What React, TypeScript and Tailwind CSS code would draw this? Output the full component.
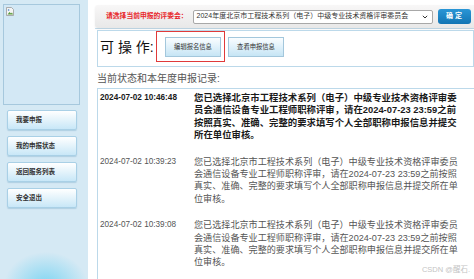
import React from 'react';

const records = [
  {
    time: '2024-07-02 10:46:48',
    bold: true,
    lines: [
      '您已选择北京市工程技术系列（电子）中级专业技术资格评审委',
      '员会通信设备专业工程师职称评审，请在2024-07-23 23:59之前',
      '按照真实、准确、完整的要求填写个人全部职称申报信息并提交',
      '所在单位审核。',
    ],
  },
  {
    time: '2024-07-02 10:39:23',
    bold: false,
    lines: [
      '您已选择北京市工程技术系列（电子）中级专业技术资格评审委员',
      '会通信设备专业工程师职称评审，请在2024-07-23 23:59之前按照',
      '真实、准确、完整的要求填写个人全部职称申报信息并提交所在单',
      '位审核。',
    ],
  },
  {
    time: '2024-07-02 10:39:08',
    bold: false,
    lines: [
      '您已选择北京市工程技术系列（电子）中级专业技术资格评审委员',
      '会通信设备专业工程师职称评审，请在2024-07-23 23:59之前按照',
      '真实、准确、完整的要求填写个人全部职称申报信息并提交所在单',
      '位审核。',
    ],
  },
];

const menu = ['我要申报', '我的申报状态', '返回服务列表', '安全退出'];

function BrokenImage() {
  return (
    <svg width="8" height="9" viewBox="0 0 8 9">
      <path d="M0.5 0.5h5l2 2v6h-7z" fill="#f4f4f4" stroke="#9a9a9a" strokeWidth="0.8" />
      <path d="M1.5 7.5l2-2.5 1.5 1.5 1-1 1 2z" fill="#5a9a3a" />
      <circle cx="2.6" cy="3" r="0.8" fill="#3b7fc4" />
    </svg>
  );
}

export default function App() {
  return (
    <div className="relative flex h-[279px] w-[474px] overflow-hidden bg-white font-['Liberation_Sans','Noto_Sans_CJK_SC',sans-serif]">
      {/* left menu */}
      <div className="flex w-[88px] shrink-0 flex-col bg-[#d5e9f4] bg-[radial-gradient(ellipse_42px_34px_at_46px_286px,#7ed5f2_0%,rgba(213,233,244,0)_100%)]">
        <div className="ml-[3px] mt-[4px] h-[101px] w-[77px] border border-[#a6c8dd] bg-[#d3e8f5] pl-[2px] pt-[2px]">
          <BrokenImage />
        </div>
        <div className="ml-[7px] mt-[5px] flex w-[70px] flex-col gap-[6px]">
          {menu.map(m => (
            <div key={m} className="flex h-[20px] items-center rounded-[2px] border border-[#a9d0e6] bg-[linear-gradient(to_bottom,#ffffff,#c8e7f7)] pl-[8px] text-[6.5px] font-bold text-[#333] shadow-[0_1px_1px_rgba(120,170,200,0.4)]">
              {m}
            </div>
          ))}
        </div>
      </div>

      {/* main */}
      <div className="flex min-w-0 flex-1 flex-col pl-[7px]">
        <div className="h-[36px] border-b border-[#c6dfee]">
          <div className="mt-[5px] flex h-[23px] items-center rounded-l-[3px] bg-[linear-gradient(to_bottom,#f8f7f7,#e8e8e8)] pl-[11px] shadow-[0_1px_2px_rgba(0,0,0,0.08)]">
            <span className="text-[6.8px] font-bold text-[#e8262a]">请选择当前申报的评委会：</span>
            <div className="ml-[5px] flex h-[14px] w-[240px] items-center justify-between rounded-[2px] border border-[#a8a8a8] bg-white pl-[3px] pr-[4px] text-[7px] text-[#333]">
              <span>2024年度北京市工程技术系列（电子）中级专业技术资格评审委员会</span>
              <svg width="6" height="4" viewBox="0 0 6 4">
                <path d="M0.8 0.8L3 3l2.2-2.2" fill="none" stroke="#333" strokeWidth="1" />
              </svg>
            </div>
            <div className="ml-[5px] flex h-[15px] w-[33px] items-center justify-center rounded-[3px] bg-[linear-gradient(to_bottom,#2a96d6,#1275b4)] text-[7px] font-bold text-white">
              确 定
            </div>
          </div>
        </div>

        <div className="ml-[2px] mt-[1px] border border-[#bcd9ea] pb-[4px] pl-[2px]">
          <div className="flex h-[31px] items-center">
            <span className="w-[56px] text-[14px] leading-none text-[#111]">可 操 作:</span>
            <div className="flex h-full items-center border border-[#e03a3a] pl-[8px] pr-[3px]">
              <div className="flex h-[20px] w-[56px] items-center justify-center border border-[#a3c7dc] bg-[linear-gradient(to_bottom,#fafdff,#c6e5f5)] text-[6.3px] text-[#333]">
                编辑报名信息
              </div>
            </div>
            <div className="ml-[3px] flex h-[20px] w-[56px] items-center justify-center border border-[#a3c7dc] bg-[linear-gradient(to_bottom,#fafdff,#c6e5f5)] text-[6.3px] text-[#333]">
              查看申报信息
            </div>
          </div>
        </div>

        <div className="ml-[2px] mt-[5px] text-[10px] leading-[14px] text-[#555]">当前状态和本年度申报记录:</div>

        <div className="ml-[2px] mt-[2px] flex-1 border-l border-t border-[#bcd9ea] pl-[2px] pt-[3px]">
          {records.map(r => (
            <div key={r.time} className={`flex h-[63.6px] ${r.bold ? 'font-bold text-[#1a1a1a]' : 'text-[#555]'}`}>
              <div className="w-[94px] shrink-0 text-[8.2px] leading-[12.4px]">{r.time}</div>
              <div className={`whitespace-nowrap leading-[12.4px] ${r.bold ? 'text-[9.4px]' : 'text-[9.1px]'}`}>
                {r.lines.map(l => (
                  <div key={l}>{l}</div>
                ))}
              </div>
            </div>
          ))}
        </div>
      </div>

      <div className="absolute bottom-[4px] right-[4px] text-[7.5px] text-[#c4c4c4]">CSDN @醒石.</div>
    </div>
  );
}
